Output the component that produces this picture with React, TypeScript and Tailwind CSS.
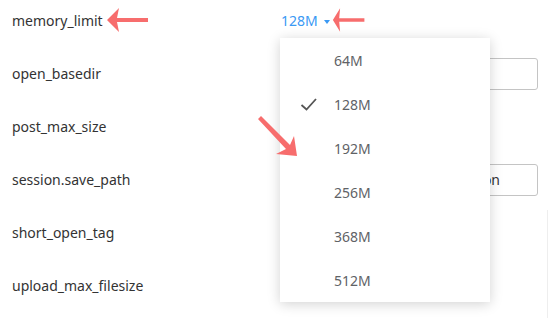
import React from 'react';

const ROWS = ['memory_limit', 'open_basedir', 'post_max_size', 'session.save_path', 'short_open_tag', 'upload_max_filesize'];
const OPTIONS = ['64M', '128M', '192M', '256M', '368M', '512M'];

const Arrow = ({ className, d }: { className: string; d: string }) => (
    <svg className={`absolute pointer-events-none ${className}`} viewBox="0 0 40 40" fill="#f76d6d">
        <path d={d} />
    </svg>
);

const App: React.FC = () => {
    return (
        <div className="relative w-[548px] h-[318px] bg-white overflow-hidden" style={{ fontFamily: '"Noto Sans", "Open Sans", sans-serif' }}>
            <div className="-mt-[6px] flex flex-col">
                {ROWS.map((label, i) => (
                    <div key={label} className="flex h-[53px] items-center">
                        <span className="w-[281px] pl-3 text-[14px] text-[#333]">{label}</span>
                        {i === 0 && (
                            <span className="flex items-center text-[14px] text-[#3a99f4]">
                                128M
                                <span className="ml-[6px] mt-[2px] h-0 w-0 border-x-[3.5px] border-t-[4px] border-x-transparent border-t-[#3a99f4]" />
                            </span>
                        )}
                        {(i === 1 || i === 3) && (
                            <div className="flex h-[32px] w-[257px] items-center justify-end rounded-[3px] border border-[#c4c4c4] pr-[37px] text-[14px] text-[#333]">
                                {i === 3 ? 'session' : ''}
                            </div>
                        )}
                    </div>
                ))}
            </div>

            <div className="absolute right-0 top-[210px] h-[108px] w-px bg-[#eeeeee]" />

            {/* dropdown */}
            <div className="absolute left-[280px] top-[38px] w-[210px] bg-white py-0 shadow-[0_2px_12px_rgba(0,0,0,0.18)]">
                {OPTIONS.map((opt) => (
                    <div key={opt} className="relative flex h-[44px] items-center pl-[54px] text-[14px] text-[#606266]">
                        {opt === '128M' && (
                            <svg className="absolute left-[20px] top-[14px]" width="18" height="16" viewBox="0 0 18 16" fill="none" stroke="#555" strokeWidth="1.8">
                                <path d="M1.5 9 L6.5 13.5 L16 3" />
                            </svg>
                        )}
                        {opt}
                    </div>
                ))}
            </div>

            {/* annotation arrows */}
            <Arrow className="left-[104px] top-[0px] w-[44px] h-[40px]" d="M1 20 L13 8 L11 18 L42 18 L42 22 L11 22 L13 32 Z" />
            <Arrow className="left-[332px] top-[0px] w-[36px] h-[40px]" d="M1 20 L9 7 L8 18 L36 18 L36 22 L8 22 L9 33 Z" />
            <svg className="absolute left-[254px] top-[112px] w-[48px] h-[48px] pointer-events-none" viewBox="0 0 48 48" fill="#f76d6d">
                <path d="M4 7 L7 4 L36 33 L40 24 L43 44 L22 42 L32 37 Z" />
            </svg>
        </div>
    );
};

export default App;
